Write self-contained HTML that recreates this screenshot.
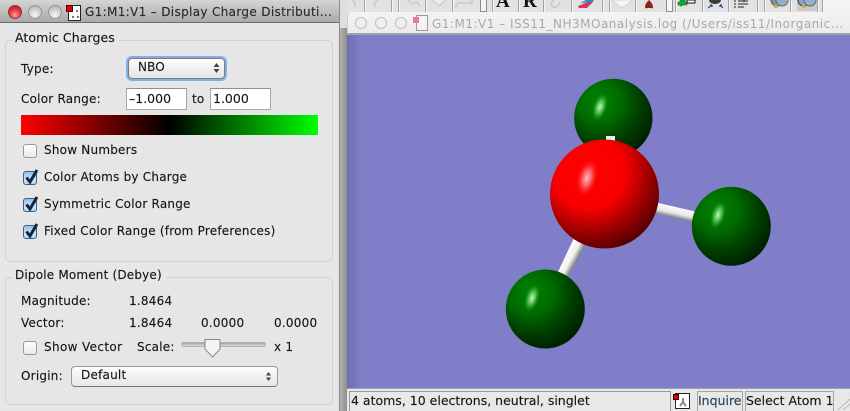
<!DOCTYPE html>
<html><head><meta charset="utf-8"><style>
html,body{margin:0;padding:0;background:#e8e8e8}
#r{position:relative;width:850px;height:411px;overflow:hidden;background:#e8e8e8;font-family:"DejaVu Sans","Liberation Sans",sans-serif;font-size:12px;color:#111}
#r div,#r span.t{position:absolute;box-sizing:border-box;white-space:nowrap}
.t{line-height:14px;letter-spacing:.22px;-webkit-text-stroke:.15px #333}
.fld{background:#fff;border:1px solid #a9a9a9;border-top-color:#8f8f8f;font-size:12.5px;line-height:20px;padding-left:2px;-webkit-text-stroke:.15px #333}
.cb{width:14px;height:14px;border:1px solid #9a9a9a;border-radius:3px;background:linear-gradient(#fff,#e9e9e9)}
.cb.on{background:linear-gradient(#8ec0ef,#c9e8fb 60%,#a9d8f8);border-color:#4d5d76}
.cb svg{position:absolute;left:-1px;top:-5px}
.grp{border:1px solid #d2d2d2;border-radius:5px;background:#e6e6e6}
.sep{top:0;height:12px;width:2px;border-right:1px solid #f4f4f4;background:none;border-left:1px solid #a4a4a4}
</style></head><body><div id="r">

<!-- back toolbar -->
<div style="left:340px;top:0;width:510px;height:14px;background:#e2e2e2"></div>
<div style="left:824px;top:0;width:26px;height:12px;background:#f3f3f3"></div>
<div style="left:797px;top:0;width:20px;height:11px;background:#c9c9c9"></div>
<div class="sep" style="left:364px"></div>
<div class="sep" style="left:391px"></div>
<div class="sep" style="left:398px"></div>
<div class="sep" style="left:425px"></div>
<div class="sep" style="left:452px"></div>
<div style="left:480px;top:0;width:7px;height:12px;background:#f4f4f4;border:1px solid #8c8c8c;border-top:0"></div>
<div class="sep" style="left:492px"></div>
<div class="sep" style="left:518px"></div>
<div class="sep" style="left:543px"></div>
<div class="sep" style="left:571px"></div>
<div class="sep" style="left:602px"></div>
<div class="sep" style="left:609px"></div>
<div class="sep" style="left:635px"></div>
<div style="left:666px;top:0;width:7px;height:12px;background:#f4f4f4;border:1px solid #8c8c8c;border-top:0"></div>
<div class="sep" style="left:675px"></div>
<div class="sep" style="left:702px"></div>
<div class="sep" style="left:728px"></div>
<div class="sep" style="left:757px"></div>
<div class="sep" style="left:764px"></div>
<div class="sep" style="left:790px"></div>
<div class="sep" style="left:817px"></div>
<div class="sep" style="left:822px"></div>
<span style="position:absolute;left:496px;top:-9px;font:bold 19px 'Liberation Serif',serif;color:#111">A</span>
<span style="position:absolute;left:523px;top:-9px;font:bold 19px 'Liberation Serif',serif;color:#111">R</span>
<svg style="position:absolute;left:340px;top:0" width="510" height="14">
<path d="M12 0q5 3 2 7M38 0q-5 3-3 7" stroke="#c8c8c8" stroke-width="1.500" fill="none"/>
<path d="M68 0l4 4l5-2l3 4" stroke="#cdcdcd" stroke-width="2" fill="none"/>
<path d="M92 0l7 6l7-6" stroke="#cfcfcf" stroke-width="1.500" fill="#ececec"/>
<path d="M118 3h14v-3M118 3l-3 5" stroke="#cfcfcf" stroke-width="2" fill="none"/>
<path d="M214 0q-5 3-1 7q5 1 7-5" stroke="#c8c8c8" stroke-width="1.500" fill="none"/>
<path d="M238 6L253 0V2L247 8H239Z" fill="#d8345e"/><path d="M240 3L246 0H254L252 2Z" fill="#2f8fb6"/>
<path d="M272 0L282 8L293 0Z" fill="#f6f6f6" stroke="#d2d2d2"/>
<path d="M309 0C306 3 305 5 305 7C305 9 307 8 309 8C311 8 313 9 313 7C313 5 312 3 309 0Z" fill="#8c2414"/>
<path d="M340 0H345V2H347V5H342V6H340V5H338V2H340Z" fill="#16a83e" stroke="#0a6a2a" stroke-width=".6"/>
<path d="M347 0H355V3H347Z" fill="#fff" stroke="#111"/>
<ellipse cx="375" cy="0" rx="6" ry="4" fill="#3c3c3c"/>
<path d="M368 8l4-3M372 5h-2M372 5v2M380 5l3 3M380 5h2M380 5v2" stroke="#1c50a8" stroke-width="1.200" fill="none"/>
<path d="M394 1h2M394 4h2M394 7h2M398 1h10M398 4h10M398 7h6M404 0v2" stroke="#222" fill="none"/>
<circle cx="437" cy="0" r="6" fill="#7f93a8" stroke="#555"/><circle cx="442" cy="0" r="6" fill="#8fb3cc" stroke="#666"/>
<circle cx="436" cy="6" r="2" fill="#c9a84a"/>
<circle cx="464" cy="0" r="6" fill="#8fa0c0" stroke="#333"/><circle cx="470" cy="0" r="6" fill="#8fb3cc" stroke="#666"/>
<circle cx="464" cy="6" r="2" fill="#c9a84a"/>
</svg>

<!-- back window -->
<div style="left:347px;top:12px;width:503px;height:23px;background:linear-gradient(#f3f3f3,#ececec);border-radius:5px 0 0 0;border-bottom:2px solid #a2a2a2;border-left:1px solid #ccc"></div>
<div style="left:355px;top:17px;width:12px;height:12px;border:1.500px solid #c0c0c0;border-radius:50%"></div>
<div style="left:375px;top:17px;width:12px;height:12px;border:1.500px solid #c0c0c0;border-radius:50%"></div>
<div style="left:395px;top:17px;width:12px;height:12px;border:1.500px solid #c0c0c0;border-radius:50%"></div>
<div style="left:416px;top:15px;width:12px;height:16px;background:#f4f4f4;border:1px solid #9a9a9a"></div>
<div style="left:413px;top:17px;width:6px;height:6px;background:#ee7a88"></div>
<span class="t" style="left:432px;top:17px;font-size:12px;color:#a9a9a9;letter-spacing:.5px;-webkit-text-stroke:0">G1:M1:V1 – ISS11_NH3MOanalysis.log (/Users/iss11/Inorganic...</span>

<!-- viewport -->
<svg style="position:absolute;left:347px;top:35px" width="503" height="354" viewBox="347 35 503 354">
<defs>
<radialGradient id="g" cx=".36" cy=".32" r=".76" fx=".3" fy=".27"><stop offset="0" stop-color="#008200"/><stop offset=".35" stop-color="#006c00"/><stop offset=".68" stop-color="#003c00"/><stop offset="1" stop-color="#001a00"/></radialGradient>
<radialGradient id="rd" cx=".38" cy=".32" r=".74" fx=".33" fy=".28"><stop offset="0" stop-color="#ff0000"/><stop offset=".45" stop-color="#f80000"/><stop offset=".75" stop-color="#980000"/><stop offset="1" stop-color="#480000"/></radialGradient>
<linearGradient id="b1" gradientUnits="userSpaceOnUse" x1="675" y1="205" x2="672" y2="218"><stop offset="0" stop-color="#fff"/><stop offset=".6" stop-color="#e8e8e8"/><stop offset="1" stop-color="#707070"/></linearGradient>
<linearGradient id="b2" gradientUnits="userSpaceOnUse" x1="566" y1="254" x2="577" y2="260"><stop offset="0" stop-color="#fff"/><stop offset=".55" stop-color="#f0f0f0"/><stop offset="1" stop-color="#808080"/></linearGradient>
<radialGradient id="hl"><stop offset="0" stop-color="#c8f8c8"/><stop offset=".45" stop-color="#70d870" stop-opacity=".75"/><stop offset="1" stop-color="#30a030" stop-opacity="0"/></radialGradient>
<radialGradient id="hr"><stop offset="0" stop-color="#ffc0c8"/><stop offset=".45" stop-color="#ff7880" stop-opacity=".75"/><stop offset="1" stop-color="#ff2020" stop-opacity="0"/></radialGradient>
<linearGradient id="lft" x1="0" x2="1"><stop offset="0" stop-color="#6f6eb0"/><stop offset="1" stop-color="#807ec8"/></linearGradient>
</defs>
<rect x="347" y="35" width="503" height="354" fill="#807ec8"/>
<rect x="347" y="35" width="14" height="354" fill="url(#lft)"/>
<circle cx="613.300" cy="118" r="39.200" fill="url(#g)"/>
<ellipse cx="600" cy="107" rx="7" ry="14" fill="url(#hl)" transform="rotate(18 600 107)"/>
<rect x="606" y="136" width="9" height="10" fill="#eee"/>
<path d="M650 201L695 211.500L692 222L650 212Z" fill="url(#b1)"/>
<path d="M574 238L585 246L567 278L557 274Z" fill="url(#b2)"/>
<circle cx="604.500" cy="194" r="54.500" fill="url(#rd)"/>
<ellipse cx="587" cy="178" rx="10" ry="19" fill="url(#hr)" transform="rotate(15 587 178)"/>
<circle cx="731.300" cy="226.300" r="39.500" fill="url(#g)"/>
<ellipse cx="718" cy="215" rx="7" ry="14" fill="url(#hl)" transform="rotate(18 718 215)"/>
<circle cx="545.300" cy="309" r="39.500" fill="url(#g)"/>
<ellipse cx="532" cy="298" rx="7" ry="14" fill="url(#hl)" transform="rotate(18 532 298)"/>
</svg>

<!-- back window left strip + status bar -->
<div style="left:340px;top:14px;width:7px;height:397px;background:linear-gradient(90deg,#b4b4b4,#8e8e8e)"></div>
<div style="left:340px;top:0;width:7px;height:28px;background:#dedede"></div>
<div style="left:347px;top:388px;width:503px;height:23px;background:#e8e8e8;border-top:1px solid #9f9fb0"></div>
<div style="left:349px;top:391px;width:322px;height:20px;border:1px solid #9a9a9a;border-bottom:0"></div>
<span class="t" style="left:351px;top:394px;font-size:12.500px;letter-spacing:0">4 atoms, 10 electrons, neutral, singlet</span>
<div style="left:675px;top:393px;width:15px;height:16px;background:#fff;border:1px solid #222"></div>
<div style="left:673px;top:394px;width:6px;height:6px;background:#e80000;border:1px solid #300"></div>
<svg style="position:absolute;left:677px;top:396px" width="12" height="12"><path d="M6 2v4M6 6l-3 4M6 6l3 4" stroke="#888" stroke-width="2" fill="none"/></svg>
<div style="left:697px;top:391px;width:46px;height:20px;border:1px solid #a6a6a6;border-bottom:0"></div>
<span class="t" style="left:698px;top:394px;font-size:12.500px;color:#2a4568;letter-spacing:0">Inquire</span>
<div style="left:745px;top:391px;width:89px;height:20px;border:1px solid #a6a6a6;border-bottom:0"></div>
<span class="t" style="left:746px;top:394px;font-size:12.500px;letter-spacing:0">Select Atom 1</span>
<svg style="position:absolute;left:838px;top:398px" width="12" height="13"><path d="M0 12L12 1M5 12L12 6" stroke="#b8b8b8"/></svg>

<!-- front dialog -->
<div style="left:0;top:0;width:339px;height:411px;background:#e7e7e7"></div>
<div style="left:339px;top:0;width:1px;height:411px;background:#8a8a8a"></div>
<div style="left:0;top:0;width:339px;height:23px;background:linear-gradient(#d5d5d5,#a9a9a9);border-bottom:1px solid #6d6d6d"></div>
<div style="left:8px;top:5px;width:14px;height:14px;border-radius:50%;background:radial-gradient(circle at 50% 75%,#ff9a90,#e0303a 55%,#a8141e);border:1px solid #8a3a3a"></div>
<div style="left:28px;top:5px;width:14px;height:14px;border-radius:50%;background:radial-gradient(circle at 50% 75%,#f4f4f4,#cacaca 60%,#a8a8a8);border:1px solid #949494"></div>
<div style="left:48px;top:5px;width:14px;height:14px;border-radius:50%;background:radial-gradient(circle at 50% 75%,#f4f4f4,#cacaca 60%,#a8a8a8);border:1px solid #949494"></div>
<div style="left:68px;top:5px;width:13px;height:16px;background:#fff;border:1px solid #222"></div>
<div style="left:66px;top:5px;width:7px;height:7px;background:#e80000;border:1px solid #400"></div>
<svg style="position:absolute;left:70px;top:8px" width="11" height="12"><path d="M6 2h2v2h-2zM2 8h2v2h-2zM7 8h2v2h-2z" fill="#777"/></svg>
<span class="t" style="left:85px;top:5px;font-size:12px;letter-spacing:.34px;color:#2a2a2a">G1:M1:V1 – Display Charge Distributi...</span>

<!-- atomic charges -->
<div class="grp" style="left:5px;top:40px;width:328px;height:222px"></div>
<div style="left:13px;top:32px;width:106px;height:16px;background:#e7e7e7"></div>
<span class="t" style="left:15px;top:31px;font-size:12.500px;letter-spacing:.08px">Atomic Charges</span>
<span class="t" style="left:21px;top:62px">Type:</span>
<div style="left:128px;top:58px;width:97px;height:21px;border-radius:4px;background:linear-gradient(#fff,#f0f0f0 50%,#e4e4e4);border:1px solid #7b7b7b;box-shadow:0 0 0 2px #7fb0e6"></div>
<span class="t" style="left:138px;top:60px;font-size:12px;letter-spacing:.1px">NBO</span>
<svg style="position:absolute;left:212px;top:62px" width="9" height="12"><path d="M4.500 1L7.500 5H1.500ZM1.500 7H7.500L4.500 11Z" fill="#444"/></svg>
<span class="t" style="left:21px;top:92px">Color Range:</span>
<div class="fld" style="left:126px;top:88px;width:61px;height:22px">–1.000</div>
<span class="t" style="left:192px;top:92px">to</span>
<div class="fld" style="left:210px;top:88px;width:61px;height:22px">1.000</div>
<div style="left:21px;top:115px;width:297px;height:20px;background:linear-gradient(90deg,#ff0000,#000 50%,#00ff00)"></div>

<div class="cb" style="left:23px;top:144px"></div>
<span class="t" style="left:44px;top:143px">Show Numbers</span>
<div class="cb on" style="left:23px;top:171px"><svg width="17" height="18"><path d="M3.500 10.500L7 15L14 3" fill="none" stroke="#16243c" stroke-width="3"/></svg></div>
<span class="t" style="left:44px;top:170px">Color Atoms by Charge</span>
<div class="cb on" style="left:23px;top:198px"><svg width="17" height="18"><path d="M3.500 10.500L7 15L14 3" fill="none" stroke="#16243c" stroke-width="3"/></svg></div>
<span class="t" style="left:44px;top:197px">Symmetric Color Range</span>
<div class="cb on" style="left:23px;top:225px"><svg width="17" height="18"><path d="M3.500 10.500L7 15L14 3" fill="none" stroke="#16243c" stroke-width="3"/></svg></div>
<span class="t" style="left:44px;top:224px">Fixed Color Range (from Preferences)</span>

<!-- dipole -->
<div class="grp" style="left:5px;top:277px;width:328px;height:128px"></div>
<div style="left:13px;top:268px;width:153px;height:16px;background:#e7e7e7"></div>
<span class="t" style="left:15px;top:268px;letter-spacing:.18px">Dipole Moment (Debye)</span>
<span class="t" style="left:21px;top:294px">Magnitude:</span>
<span class="t" style="left:129px;top:294px">1.8464</span>
<span class="t" style="left:21px;top:316px">Vector:</span>
<span class="t" style="left:129px;top:316px">1.8464</span>
<span class="t" style="left:201px;top:316px">0.0000</span>
<span class="t" style="left:274px;top:316px">0.0000</span>
<div class="cb" style="left:23px;top:341px"></div>
<span class="t" style="left:44px;top:340px;letter-spacing:.36px">Show Vector</span>
<span class="t" style="left:137px;top:340px">Scale:</span>
<div style="left:181px;top:342px;width:85px;height:5px;border-radius:3px;background:linear-gradient(#a4a4a4,#dcdcdc);border:1px solid #b0b0b0"></div>
<svg style="position:absolute;left:203px;top:338px" width="19" height="21"><path d="M2 1.500H17V11L9.500 19L2 11Z" fill="#f4f4f4" stroke="#8a8a8a"/></svg>
<span class="t" style="left:274px;top:340px">x 1</span>
<span class="t" style="left:21px;top:369px">Origin:</span>
<div style="left:71px;top:366px;width:207px;height:21px;border-radius:4px;background:linear-gradient(#fff,#f0f0f0 50%,#e8e8e8);border:1px solid #9a9a9a;border-bottom-color:#777"></div>
<span class="t" style="left:81px;top:368px">Default</span>
<svg style="position:absolute;left:264px;top:371px" width="9" height="12"><path d="M4.500 1L7 4.500H2ZM2 6.500H7L4.500 10Z" fill="#444"/></svg>
</div></body></html>
